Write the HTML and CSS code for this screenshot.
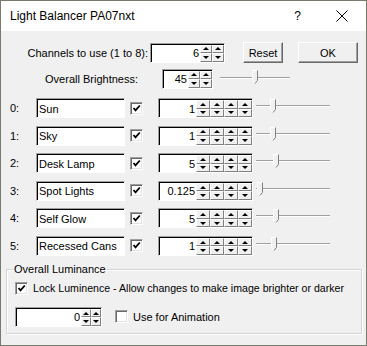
FILE: index.html
```html
<!DOCTYPE html>
<html lang="en">
<head>
    <meta charset="UTF-8">
    <title>Light Balancer PA07nxt</title>
    <link rel="stylesheet" href="styles.css">
</head>
<body>
    <div class="dialog">
        <div class="titlebar">
            <span class="title">Light Balancer PA07nxt</span>
            <span class="help">?</span>
            <svg class="close" width="12" height="12" viewBox="0 0 12 12">
                <path d="M0.5 0.5L11.5 11.5M11.5 0.5L0.5 11.5" stroke="#000" stroke-width="1" fill="none"/>
            </svg>
        </div>

        <div class="content">
            <div class="row row-top">
                <label class="lbl lbl-channels">Channels to use (1 to 8):</label>
                <div class="spin spin-channels">
                    <input class="spin-val" type="text" value="6">
                    <span class="sc"><span class="sb up"></span><span class="sb down"></span></span>
                    <span class="sc"><span class="sb up"></span><span class="sb down"></span></span>
                </div>
                <button class="btn btn-reset">Reset</button>
                <button class="btn btn-ok">OK</button>
            </div>

            <div class="row row-bright">
                <label class="lbl lbl-bright">Overall Brightness:</label>
                <div class="spin spin-bright">
                    <input class="spin-val" type="text" value="45">
                    <span class="sc"><span class="sb up"></span><span class="sb down"></span></span>
                    <span class="sc"><span class="sb up"></span><span class="sb down"></span></span>
                </div>
                <svg class="slider slider-bright" width="74" height="21">
                    <rect x="2" y="9" width="70" height="1" fill="#a0a0a0"/>
                    <rect x="2" y="10" width="70" height="1" fill="#fff"/>
                    <g transform="translate(34,2)">
                        <polygon points="0.5,0.5 5.5,0.5 5.5,10.5 3,13.5 0.5,10.5" fill="#f0f0f0"/>
                        <polyline points="3,13.5 0.5,10.5 0.5,0.5 5.5,0.5" stroke="#fff" fill="none"/>
                        <polyline points="5.5,0.5 5.5,10.5 3,13.5" stroke="#808080" fill="none"/>
                    </g>
                </svg>
            </div>

            <div class="channels">
                <div class="row ch-row">
                    <span class="ch-num">0:</span>
                    <input class="txt" type="text" value="Sun">
                    <span class="chk"><svg width="9" height="9" viewBox="0 0 9 9"><path d="M1.5 4L3.5 6.3L7.8 1.5" stroke="#000" stroke-width="1.8" fill="none"/></svg></span>
                    <div class="spin spin-ch">
                        <input class="spin-val" type="text" value="1">
                        <span class="sc"><span class="sb up"></span><span class="sb down"></span></span>
                        <span class="sc"><span class="sb up"></span><span class="sb down"></span></span>
                        <span class="sc"><span class="sb up"></span><span class="sb down"></span></span>
                        <span class="sc"><span class="sb up"></span><span class="sb down"></span></span>
                    </div>
                    <svg class="slider slider-ch" width="78" height="20">
                        <rect x="2" y="7" width="74" height="1" fill="#a0a0a0"/>
                        <rect x="2" y="8" width="74" height="1" fill="#fff"/>
                        <g transform="translate(16,1)">
                            <polygon points="0.5,0.5 5.5,0.5 5.5,10.5 3,13.5 0.5,10.5" fill="#f0f0f0"/>
                            <polyline points="3,13.5 0.5,10.5 0.5,0.5 5.5,0.5" stroke="#fff" fill="none"/>
                            <polyline points="5.5,0.5 5.5,10.5 3,13.5" stroke="#808080" fill="none"/>
                        </g>
                    </svg>
                </div>

                <div class="row ch-row">
                    <span class="ch-num">1:</span>
                    <input class="txt" type="text" value="Sky">
                    <span class="chk"><svg width="9" height="9" viewBox="0 0 9 9"><path d="M1.5 4L3.5 6.3L7.8 1.5" stroke="#000" stroke-width="1.8" fill="none"/></svg></span>
                    <div class="spin spin-ch">
                        <input class="spin-val" type="text" value="1">
                        <span class="sc"><span class="sb up"></span><span class="sb down"></span></span>
                        <span class="sc"><span class="sb up"></span><span class="sb down"></span></span>
                        <span class="sc"><span class="sb up"></span><span class="sb down"></span></span>
                        <span class="sc"><span class="sb up"></span><span class="sb down"></span></span>
                    </div>
                    <svg class="slider slider-ch" width="78" height="20">
                        <rect x="2" y="7" width="74" height="1" fill="#a0a0a0"/>
                        <rect x="2" y="8" width="74" height="1" fill="#fff"/>
                        <g transform="translate(16,1)">
                            <polygon points="0.5,0.5 5.5,0.5 5.5,10.5 3,13.5 0.5,10.5" fill="#f0f0f0"/>
                            <polyline points="3,13.5 0.5,10.5 0.5,0.5 5.5,0.5" stroke="#fff" fill="none"/>
                            <polyline points="5.5,0.5 5.5,10.5 3,13.5" stroke="#808080" fill="none"/>
                        </g>
                    </svg>
                </div>

                <div class="row ch-row">
                    <span class="ch-num">2:</span>
                    <input class="txt" type="text" value="Desk Lamp">
                    <span class="chk"><svg width="9" height="9" viewBox="0 0 9 9"><path d="M1.5 4L3.5 6.3L7.8 1.5" stroke="#000" stroke-width="1.8" fill="none"/></svg></span>
                    <div class="spin spin-ch">
                        <input class="spin-val" type="text" value="5">
                        <span class="sc"><span class="sb up"></span><span class="sb down"></span></span>
                        <span class="sc"><span class="sb up"></span><span class="sb down"></span></span>
                        <span class="sc"><span class="sb up"></span><span class="sb down"></span></span>
                        <span class="sc"><span class="sb up"></span><span class="sb down"></span></span>
                    </div>
                    <svg class="slider slider-ch" width="78" height="20">
                        <rect x="2" y="7" width="74" height="1" fill="#a0a0a0"/>
                        <rect x="2" y="8" width="74" height="1" fill="#fff"/>
                        <g transform="translate(19,1)">
                            <polygon points="0.5,0.5 5.5,0.5 5.5,10.5 3,13.5 0.5,10.5" fill="#f0f0f0"/>
                            <polyline points="3,13.5 0.5,10.5 0.5,0.5 5.5,0.5" stroke="#fff" fill="none"/>
                            <polyline points="5.5,0.5 5.5,10.5 3,13.5" stroke="#808080" fill="none"/>
                        </g>
                    </svg>
                </div>

                <div class="row ch-row">
                    <span class="ch-num">3:</span>
                    <input class="txt" type="text" value="Spot Lights">
                    <span class="chk"><svg width="9" height="9" viewBox="0 0 9 9"><path d="M1.5 4L3.5 6.3L7.8 1.5" stroke="#000" stroke-width="1.8" fill="none"/></svg></span>
                    <div class="spin spin-ch">
                        <input class="spin-val" type="text" value="0.125">
                        <span class="sc"><span class="sb up"></span><span class="sb down"></span></span>
                        <span class="sc"><span class="sb up"></span><span class="sb down"></span></span>
                        <span class="sc"><span class="sb up"></span><span class="sb down"></span></span>
                        <span class="sc"><span class="sb up"></span><span class="sb down"></span></span>
                    </div>
                    <svg class="slider slider-ch" width="78" height="20">
                        <rect x="2" y="7" width="74" height="1" fill="#a0a0a0"/>
                        <rect x="2" y="8" width="74" height="1" fill="#fff"/>
                        <g transform="translate(3,1)">
                            <polygon points="0.5,0.5 5.5,0.5 5.5,10.5 3,13.5 0.5,10.5" fill="#f0f0f0"/>
                            <polyline points="3,13.5 0.5,10.5 0.5,0.5 5.5,0.5" stroke="#fff" fill="none"/>
                            <polyline points="5.5,0.5 5.5,10.5 3,13.5" stroke="#808080" fill="none"/>
                        </g>
                    </svg>
                </div>

                <div class="row ch-row">
                    <span class="ch-num">4:</span>
                    <input class="txt" type="text" value="Self Glow">
                    <span class="chk"><svg width="9" height="9" viewBox="0 0 9 9"><path d="M1.5 4L3.5 6.3L7.8 1.5" stroke="#000" stroke-width="1.8" fill="none"/></svg></span>
                    <div class="spin spin-ch">
                        <input class="spin-val" type="text" value="5">
                        <span class="sc"><span class="sb up"></span><span class="sb down"></span></span>
                        <span class="sc"><span class="sb up"></span><span class="sb down"></span></span>
                        <span class="sc"><span class="sb up"></span><span class="sb down"></span></span>
                        <span class="sc"><span class="sb up"></span><span class="sb down"></span></span>
                    </div>
                    <svg class="slider slider-ch" width="78" height="20">
                        <rect x="2" y="7" width="74" height="1" fill="#a0a0a0"/>
                        <rect x="2" y="8" width="74" height="1" fill="#fff"/>
                        <g transform="translate(19,1)">
                            <polygon points="0.5,0.5 5.5,0.5 5.5,10.5 3,13.5 0.5,10.5" fill="#f0f0f0"/>
                            <polyline points="3,13.5 0.5,10.5 0.5,0.5 5.5,0.5" stroke="#fff" fill="none"/>
                            <polyline points="5.5,0.5 5.5,10.5 3,13.5" stroke="#808080" fill="none"/>
                        </g>
                    </svg>
                </div>

                <div class="row ch-row">
                    <span class="ch-num">5:</span>
                    <input class="txt" type="text" value="Recessed Cans">
                    <span class="chk"><svg width="9" height="9" viewBox="0 0 9 9"><path d="M1.5 4L3.5 6.3L7.8 1.5" stroke="#000" stroke-width="1.8" fill="none"/></svg></span>
                    <div class="spin spin-ch">
                        <input class="spin-val" type="text" value="1">
                        <span class="sc"><span class="sb up"></span><span class="sb down"></span></span>
                        <span class="sc"><span class="sb up"></span><span class="sb down"></span></span>
                        <span class="sc"><span class="sb up"></span><span class="sb down"></span></span>
                        <span class="sc"><span class="sb up"></span><span class="sb down"></span></span>
                    </div>
                    <svg class="slider slider-ch" width="78" height="20">
                        <rect x="2" y="7" width="74" height="1" fill="#a0a0a0"/>
                        <rect x="2" y="8" width="74" height="1" fill="#fff"/>
                        <g transform="translate(17,1)">
                            <polygon points="0.5,0.5 5.5,0.5 5.5,10.5 3,13.5 0.5,10.5" fill="#f0f0f0"/>
                            <polyline points="3,13.5 0.5,10.5 0.5,0.5 5.5,0.5" stroke="#fff" fill="none"/>
                            <polyline points="5.5,0.5 5.5,10.5 3,13.5" stroke="#808080" fill="none"/>
                        </g>
                    </svg>
                </div>
            </div>

            <fieldset class="group">
                <legend>Overall Luminance</legend>
                <div class="row lock-row">
                    <span class="chk"><svg width="9" height="9" viewBox="0 0 9 9"><path d="M1.5 4L3.5 6.3L7.8 1.5" stroke="#000" stroke-width="1.8" fill="none"/></svg></span>
                    <span class="chk-text lock-text">Lock Luminence - Allow changes to make image brighter or darker</span>
                </div>
                <div class="row anim-row">
                    <div class="spin spin-lum">
                        <input class="spin-val" type="text" value="0">
                        <span class="sc"><span class="sb up"></span><span class="sb down"></span></span>
                        <span class="sc"><span class="sb up"></span><span class="sb down"></span></span>
                    </div>
                    <span class="chk chk-anim"></span>
                    <span class="chk-text">Use for Animation</span>
                </div>
            </fieldset>
        </div>
    </div>
</body>
</html>
```

FILE: styles.css
```css
body {
    margin: 0;
    background-color: #fff;
    font-family: "Liberation Sans", Arial, sans-serif;
    font-size: 11px;
    color: #000;
}

.dialog {
    width: 367px;
    height: 346px;
    box-sizing: border-box;
    border: 1px solid #767b6e;
    background-color: #f0f0f0;
    display: flex;
    flex-direction: column;
}

.titlebar {
    height: 30px;
    flex: none;
    background-color: #fff;
    display: flex;
    align-items: center;
    padding-left: 9px;
}

.title {
    flex: 1;
    font-size: 12px;
}

.help {
    font-size: 12px;
    margin-right: 35px;
}

.close {
    margin-right: 18px;
}

.content {
    padding-top: 11px;
}

.row {
    display: flex;
    align-items: center;
}

.lbl {
    text-align: right;
}

/* top rows */

.row-top {
    height: 21px;
}

.lbl-channels {
    width: 147px;
}

.spin-channels {
    margin-left: 2px;
    width: 75px;
    height: 21px;
}

.btn {
    font-family: inherit;
    font-size: 11px;
    height: 21px;
    padding: 0;
    background-color: #f0f0f0;
    color: #000;
    border: 1px solid;
    border-color: #fff #696969 #696969 #fff;
    box-shadow: inset -1px -1px 0 #a0a0a0;
}

.btn-reset {
    margin-left: 18px;
    width: 40px;
}

.btn-ok {
    margin-left: 15px;
    width: 60px;
}

.row-bright {
    height: 21px;
    margin-top: 5px;
}

.lbl-bright {
    width: 137px;
}

.spin-bright {
    margin-left: 24px;
    width: 51px;
    height: 21px;
}

.slider-bright {
    margin-left: 5px;
}

/* spin boxes */

.spin {
    display: flex;
    box-sizing: border-box;
    height: 20px;
    background-color: #fff;
    border: 1px solid;
    border-color: #a0a0a0 #fff #fff #a0a0a0;
    box-shadow: inset 1px 1px 0 #000;
}

.spin-val {
    flex: 1;
    min-width: 0;
    border: none;
    background: transparent;
    font-family: inherit;
    font-size: 11px;
    text-align: right;
    padding: 0 1px 0 0;
    margin: 1px 0 0 1px;
    outline: none;
}

.sc {
    display: flex;
    flex-direction: column;
    width: 12px;
    padding-top: 1px;
}

.spin-ch .sc {
    width: 14px;
}

.spin-lum .sc {
    width: 10px;
}

.sb {
    flex: 1;
    box-sizing: border-box;
    border: 1px solid;
    border-color: #fff #808080 #808080 #fff;
    background-color: #f0f0f0;
    display: flex;
    align-items: center;
    justify-content: center;
}

.sb::after {
    content: "";
    border-left: 3px solid transparent;
    border-right: 3px solid transparent;
}

.up::after {
    border-bottom: 3px solid #000;
}

.down::after {
    border-top: 3px solid #000;
}

/* channel rows */

.channels {
    margin-top: 9px;
    display: flex;
    flex-direction: column;
    gap: 7.6px;
}

.ch-row {
    height: 20px;
}

.ch-num {
    width: 26px;
    padding-left: 9px;
}

.txt {
    box-sizing: border-box;
    width: 89px;
    height: 20px;
    border: 1px solid;
    border-color: #a0a0a0 #fff #fff #a0a0a0;
    box-shadow: inset 1px 1px 0 #000;
    background-color: #fff;
    font-family: inherit;
    font-size: 11px;
    padding: 1px 0 0 2px;
    margin: 0;
    outline: none;
}

.chk {
    box-sizing: border-box;
    width: 13px;
    height: 13px;
    margin-left: 5px;
    background-color: #fff;
    border: 1px solid;
    border-color: #a0a0a0 #fff #fff #a0a0a0;
    box-shadow: inset 1px 1px 0 #696969, inset -1px -1px 0 #e3e3e3;
    display: flex;
    align-items: center;
    justify-content: center;
    flex: none;
}

.spin-ch {
    margin-left: 15px;
    width: 95px;
}

.slider {
    display: block;
    flex: none;
}

.slider-ch {
    margin-left: 1px;
}

/* luminance group */

.group {
    margin: 7px 0 0 5px;
    width: 356px;
    box-sizing: border-box;
    border: 1px solid #d5d5d5;
    box-shadow: inset 1px 1px 0 #fff, 1px 1px 0 #fff;
    padding: 0 0 6px 6px;
}

.group legend {
    padding: 0 1px;
    line-height: 13px;
}

.lock-row {
    margin-top: 6px;
    height: 13px;
}

.lock-row .chk {
    margin-left: 2px;
}

.chk-text {
    margin-left: 5px;
}

.lock-text {
    font-size: 10.6px;
}

.anim-row {
    margin-top: 12px;
    height: 20px;
}

.spin-lum {
    margin-left: 2px;
    width: 87px;
}

.chk-anim {
    margin-left: 13px;
}
```
